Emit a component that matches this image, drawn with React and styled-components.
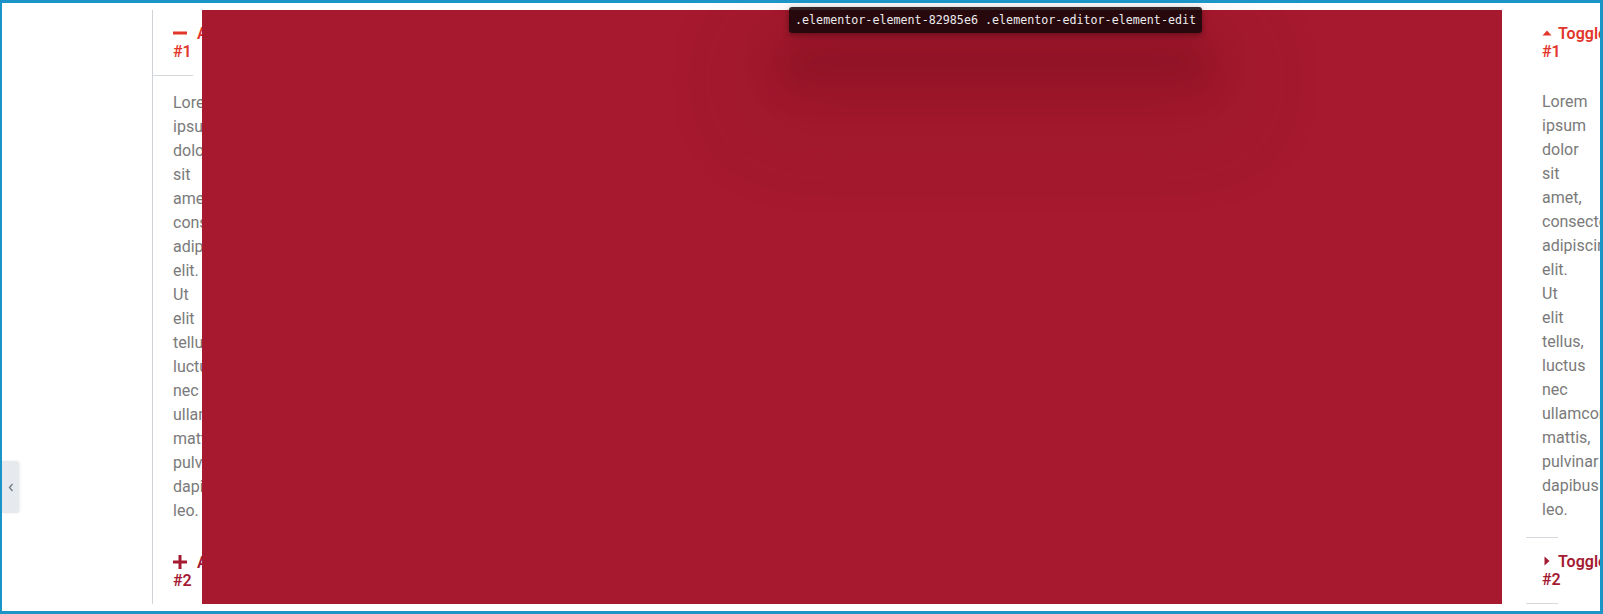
import styled, { createGlobalStyle } from "styled-components";

const GlobalStyle = createGlobalStyle`
  html, body {
    margin: 0;
    padding: 0;
    background: #ffffff;
  }
  body {
    font-family: Roboto, "Liberation Sans", sans-serif;
  }
`;

const ACTIVE = "#e2362b";
const IDLE = "#a41a33";
const LINE = "#d5d8dc";

const Frame = styled.div`
  position: relative;
  box-sizing: border-box;
  width: 1603px;
  height: 614px;
  border: 3px solid #1b94c8;
  border-left-width: 2px;
  padding: 7px 0;
  background: #fff;
  overflow: hidden;
`;

const Stage = styled.div`
  display: flex;
  height: 594px;
  overflow: hidden;
`;

const Gutter = styled.div`
  flex: 0 0 150px;
`;

const LeftColumn = styled.div`
  flex: 0 0 50px;
`;

const Accordion = styled.div`
  width: 40px;
  height: 100%;
  border-left: 1px solid #cfd2d6;
`;

const AccordionTitle = styled.div`
  padding: 15px 20px;
  font-size: 16px;
  font-weight: 600;
  line-height: 1.1;
  color: ${(p) => (p.$active ? ACTIVE : IDLE)};
  border-bottom: ${(p) => (p.$active ? `1px solid ${LINE}` : "none")};
`;

const NoWrap = styled.span`
  white-space: nowrap;
`;

const AccIcon = styled.span`
  display: inline-block;
  width: 24px;
  vertical-align: middle;
  line-height: 0;
  position: relative;
  top: -2px;
`;

const ToggleIcon = styled.span`
  display: inline-block;
  width: 16px;
  vertical-align: middle;
  line-height: 0;
  position: relative;
  top: -2px;
`;

const Body = styled.div`
  padding: ${(p) => p.$pad};
  font-size: 16px;
  line-height: 24px;
  color: #7a7a7a;
  border-bottom: ${(p) => (p.$line ? `1px solid ${LINE}` : "1px solid transparent")};
`;

const RedPanel = styled.div`
  flex: 0 0 1300px;
  background: #a6192e;
`;

const RightColumn = styled.div`
  flex: 1;
  padding-left: 24px;
`;

const Toggle = styled.div`
  width: 31px;
`;

const ToggleTitle = styled.div`
  padding: 15px 16px;
  font-size: 16px;
  font-weight: 600;
  line-height: 1.1;
  color: ${(p) => (p.$active ? ACTIVE : IDLE)};
  border-bottom: ${(p) => (p.$active ? "none" : `1px solid ${LINE}`)};
`;

const Tooltip = styled.div`
  position: absolute;
  left: 787px;
  top: 4px;
  height: 26px;
  padding: 0 6px;
  display: flex;
  align-items: center;
  border-radius: 3px;
  background: rgba(22, 6, 9, 0.88);
  color: #ececec;
  font-family: "DejaVu Sans Mono", "Liberation Mono", monospace;
  font-size: 11.7px;
  white-space: nowrap;
  box-shadow: 0 2px 6px rgba(0, 0, 0, 0.35),
    0 42px 40px 8px rgba(70, 0, 15, 0.2),
    0 60px 90px 50px rgba(70, 0, 15, 0.07);
`;

const SideTab = styled.div`
  position: absolute;
  left: 0;
  top: 458px;
  width: 17px;
  height: 52px;
  display: flex;
  align-items: center;
  justify-content: center;
  background: #e6e9ed;
  box-shadow: 1px 0 3px rgba(0, 0, 0, 0.08);
  border-radius: 0 3px 3px 0;
`;

const Minus = () => (
  <svg width="14" height="14" viewBox="0 0 14 14">
    <rect x="0" y="5.5" width="14" height="3" fill="currentColor" />
  </svg>
);

const Plus = () => (
  <svg width="14" height="14" viewBox="0 0 14 14">
    <rect x="0" y="5.5" width="14" height="3" fill="currentColor" />
    <rect x="5.5" y="0" width="3" height="14" fill="currentColor" />
  </svg>
);

const CaretUp = () => (
  <svg width="10" height="10" viewBox="0 0 10 10">
    <polygon points="0.5,7.5 9.5,7.5 5,2.5" fill="currentColor" />
  </svg>
);

const CaretRight = () => (
  <svg width="10" height="10" viewBox="0 0 10 10">
    <polygon points="2.5,0.5 2.5,9.5 7.5,5" fill="currentColor" />
  </svg>
);

const LOREM =
  "Lorem ipsum dolor sit amet, consectetur adipiscing elit. Ut elit tellus, luctus nec ullamcorper mattis, pulvinar dapibus leo.";

function App() {
  return (
    <>
      <GlobalStyle />
      <Frame>
        <Stage>
          <Gutter />
          <LeftColumn>
            <Accordion>
              <AccordionTitle $active>
                <NoWrap>
                  <AccIcon><Minus /></AccIcon>Accordion
                </NoWrap>{" "}
                #1
              </AccordionTitle>
              <Body $pad="15px 20px">{LOREM}</Body>
              <AccordionTitle>
                <NoWrap>
                  <AccIcon><Plus /></AccIcon>Accordion
                </NoWrap>{" "}
                #2
              </AccordionTitle>
            </Accordion>
          </LeftColumn>
          <RedPanel />
          <RightColumn>
            <Toggle>
              <ToggleTitle $active>
                <NoWrap>
                  <ToggleIcon><CaretUp /></ToggleIcon>Toggle
                </NoWrap>{" "}
                #1
              </ToggleTitle>
              <Body $pad="15px 16px" $line>{LOREM}</Body>
              <ToggleTitle>
                <NoWrap>
                  <ToggleIcon><CaretRight /></ToggleIcon>Toggle
                </NoWrap>{" "}
                #2
              </ToggleTitle>
            </Toggle>
          </RightColumn>
        </Stage>
        <Tooltip>.elementor-element-82985e6 .elementor-editor-element-edit</Tooltip>
        <SideTab>
          <svg width="6" height="9" viewBox="0 0 6 9">
            <polyline points="4.5,1 1.5,4.5 4.5,8" fill="none" stroke="#6f7a85" strokeWidth="1.3" />
          </svg>
        </SideTab>
      </Frame>
    </>
  );
}

export default App;
